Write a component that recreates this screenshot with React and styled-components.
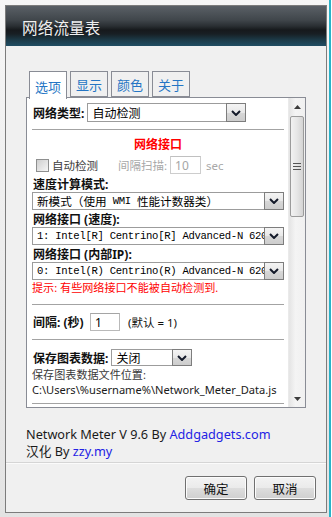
import React from "react";
import styled, { createGlobalStyle } from "styled-components";

const Global = createGlobalStyle`
  html, body { margin: 0; padding: 0; background: #fff; }
  body { font-family: "Noto Sans", "Noto Sans CJK SC", sans-serif; }
  * { box-sizing: border-box; }
`;

const CJK = `"Noto Sans", "Noto Sans CJK SC", sans-serif`;

const Outer = styled.div`
  width: 332px;
  height: 517px;
  padding-right: 1px;
  background: #fff;
`;

const Frame = styled.div`
  height: 100%;
  border-right: 2px solid #29b3c9;
  background: linear-gradient(#f6f6f6, #e3e3e3);
  padding: 5px 2px 4px 5px;
  display: flex;
`;

const Dialog = styled.div`
  flex: 1;
  min-width: 0;
  border: 1px solid #7c7c7c;
  background: #f0f0f0;
  display: flex;
  flex-direction: column;
`;

const TitleBar = styled.div`
  height: 40px;
  flex: none;
  background: linear-gradient(
    to bottom,
    #5a6066 0%,
    #40464b 35%,
    #2a2f33 50%,
    #16191c 60%,
    #181f24 70%,
    #1c3a48 85%,
    #1f4d63 100%
  );
  color: #f0f0f0;
  font-family: ${CJK};
  font-size: 15.5px;
  display: flex;
  align-items: center;
  padding: 3px 0 0 16px;
  letter-spacing: 0.2px;
`;

const Main = styled.div`
  padding: 25px 0 0 20px;
  display: flex;
  flex-direction: column;
`;

const TabRow = styled.div`
  display: flex;
  gap: 3px;
  padding-left: 3px;
  height: 26px;
  align-items: flex-start;
`;

const Tab = styled.div`
  width: 38px;
  height: ${(p) => (p.$active ? "28px" : "26px")};
  border: 1px solid #898c95;
  border-bottom: ${(p) => (p.$active ? "none" : "1px solid #898c95")};
  background: ${(p) => (p.$active ? "#fff" : "#f0f0f0")};
  color: #2475c4;
  font-family: ${CJK};
  font-size: 13px;
  display: flex;
  align-items: center;
  justify-content: center;
  padding-top: 1px;
  position: relative;
  z-index: ${(p) => (p.$active ? 2 : 0)};
`;

const Panel = styled.div`
  width: 280px;
  height: 311px;
  border: 1px solid #898c95;
  background: #fff;
  display: flex;
  overflow: hidden;
`;

const Content = styled.div`
  flex: 1;
  min-width: 0;
  overflow: hidden;
  padding: 0 4px 0 5px;
  display: flex;
  flex-direction: column;
  font-family: ${CJK};
  font-size: 11.5px;
  color: #111;
`;

const Row = styled.div`
  display: flex;
  align-items: center;
  height: ${(p) => p.$h || 18}px;
  margin-top: ${(p) => p.$mt || 0}px;
  gap: ${(p) => p.$gap || 0}px;
  padding-left: ${(p) => p.$pl || 0}px;
  flex: none;
`;

const Label = styled.span`
  font-weight: 700;
  font-size: 12px;
  padding-left: 1px;
  width: ${(p) => (p.$w ? p.$w + "px" : "auto")};
  flex: none;
  white-space: nowrap;
`;

const Rule = styled.div`
  height: 1px;
  background: #a3a3a3;
  margin-top: ${(p) => p.$mt || 0}px;
  flex: none;
`;

const SectionTitle = styled.div`
  height: 16px;
  margin-top: ${(p) => p.$mt || 0}px;
  text-align: center;
  color: #ff0000;
  font-weight: 700;
  font-size: 12px;
  line-height: 16px;
  flex: none;
`;

const Select = styled.div`
  display: flex;
  height: ${(p) => p.$h || 18}px;
  width: ${(p) => (p.$w ? p.$w + "px" : "100%")};
  min-width: 0;
  border: 1px solid #9c9c9c;
  background: #fff;
  flex: none;
`;

const SelectText = styled.div`
  flex: 1;
  min-width: 0;
  overflow: hidden;
  white-space: nowrap;
  display: flex;
  align-items: center;
  padding-left: 4px;
  font-family: ${(p) => (p.$mono ? `"Liberation Mono", "Noto Sans CJK SC", monospace` : CJK)};
  font-size: ${(p) => (p.$mono ? "10.6px" : "12px")};
  letter-spacing: ${(p) => (p.$mono ? "-0.3px" : "0")};
  color: #000;
`;

const Wide = styled.span`
  font-family: "Noto Sans CJK SC", sans-serif;
  font-size: 11.6px;
  letter-spacing: 0;
`;

const DropBtn = styled.div`
  width: 20px;
  flex: none;
  margin: -1px -1px -1px 0;
  border: 1px solid #7d7d7d;
  background: linear-gradient(#f4f4f4 0%, #e8e8e8 50%, #d7d7d7 51%, #cdcdcd 100%);
  display: flex;
  align-items: center;
  justify-content: center;
`;

const Chevron = () => (
  <svg width="10" height="6" viewBox="0 0 10 6">
    <path d="M1 1 L5 5 L9 1" fill="none" stroke="#141a2a" strokeWidth="2" />
  </svg>
);

const Dropdown = ({ children, w, h, mono }) => (
  <Select $w={w} $h={h}>
    <SelectText $mono={mono}>{children}</SelectText>
    <DropBtn>
      <Chevron />
    </DropBtn>
  </Select>
);

const Check = styled.div`
  width: 13px;
  height: 13px;
  border: 1px solid #8e8f8f;
  background: linear-gradient(135deg, #cfcfcf, #f6f6f6);
  flex: none;
`;

const Muted = styled.span`
  color: ${(p) => p.$c || "#a8a8a8"};
  white-space: nowrap;
  margin-left: ${(p) => p.$ml || 0}px;
`;

const TextBox = styled.div`
  width: ${(p) => p.$w}px;
  height: 18px;
  border: 1px solid ${(p) => (p.$disabled ? "#cdcdcd" : "#b9b9b9")};
  border-top-color: ${(p) => (p.$disabled ? "#c0c0c0" : "#a5a5a5")};
  color: ${(p) => (p.$disabled ? "#a5a5a5" : "#000")};
  padding-left: 4px;
  display: flex;
  align-items: center;
  font-size: 12px;
  margin-left: ${(p) => p.$ml || 0}px;
  flex: none;
  background: #fff;
`;

const Note = styled.div`
  height: ${(p) => p.$h || 16}px;
  line-height: ${(p) => p.$h || 16}px;
  margin-top: ${(p) => p.$mt || 0}px;
  color: ${(p) => p.$c || "#ff0000"};
  font-size: 11.1px;
  white-space: nowrap;
  flex: none;
`;

const ScrollBar = styled.div`
  width: 17px;
  flex: none;
  display: flex;
  flex-direction: column;
  background: linear-gradient(to right, #e4e4e4, #f4f4f4 40%, #f0f0f0);
  border-left: 1px solid #eaeaea;
`;

const ArrowBtn = styled.div`
  height: 17px;
  flex: none;
  display: flex;
  align-items: center;
  justify-content: center;
`;

const Track = styled.div`
  flex: 1;
  display: flex;
  flex-direction: column;
  padding: 1px 1px 0 1px;
`;

const Thumb = styled.div`
  height: 101px;
  border: 1px solid #9b9b9b;
  border-radius: 2px;
  background: linear-gradient(to right, #f2f2f2, #e6e6e6 50%, #d4d4d4);
  display: flex;
  align-items: center;
  justify-content: center;
`;

const Grip = () => (
  <svg width="8" height="7" viewBox="0 0 8 7">
    <path d="M0 0.5H8M0 3.5H8M0 6.5H8" stroke="#555" strokeWidth="1" />
  </svg>
);

const Tri = ({ up }) => (
  <svg width="7" height="4" viewBox="0 0 7 4">
    <path d={up ? "M0 4 L3.5 0 L7 4 Z" : "M0 0 L3.5 4 L7 0 Z"} fill="#3c3c3c" />
  </svg>
);

const Footer = styled.div`
  margin-top: 18px;
  font-family: ${CJK};
  font-size: 12.7px;
  line-height: 17px;
  color: #1a1a1a;
`;

const Link = styled.span`
  color: #2323e4;
`;

const Separator = styled.div`
  margin-top: 2px;
  height: 2px;
  border-top: 1px solid #d5d5d5;
  border-bottom: 1px solid #fbfbfb;
`;

const ButtonBar = styled.div`
  display: flex;
  justify-content: flex-end;
  gap: 7px;
  padding: 12px 10px 0 0;
`;

const Button = styled.div`
  width: 62px;
  height: 24px;
  border: 1px solid #707070;
  border-radius: 3px;
  background: linear-gradient(#f3f3f3 0%, #ebebeb 48%, #dddddd 52%, #cfcfcf 100%);
  box-shadow: inset 0 0 0 1px #fcfcfc;
  display: flex;
  align-items: center;
  justify-content: center;
  font-family: ${CJK};
  font-size: 12.5px;
  color: #111;
`;

export default function App() {
  return (
    <>
      <Global />
      <Outer>
        <Frame>
          <Dialog>
            <TitleBar>网络流量表</TitleBar>
            <Main>
              <TabRow>
                <Tab $active>选项</Tab>
                <Tab>显示</Tab>
                <Tab>颜色</Tab>
                <Tab>关于</Tab>
              </TabRow>
              <Panel>
                <Content>
                  <Row $mt={5} $h={19} $gap={3}>
                    <Label>网络类型:</Label>
                    <Dropdown w={159} h={19}>自动检测</Dropdown>
                  </Row>
                  <Rule $mt={7} />
                  <SectionTitle $mt={7}>网络接口</SectionTitle>
                  <Row $mt={3} $pl={4}>
                    <Check />
                    <Muted $c="#3c3c3c" $ml={3}>自动检测</Muted>
                    <Muted $ml={20}>间隔扫描:</Muted>
                    <TextBox $w={31} $ml={3} $disabled>10</TextBox>
                    <Muted $ml={5}>sec</Muted>
                  </Row>
                  <Row $mt={2} $h={16}>
                    <Label>速度计算模式:</Label>
                  </Row>
                  <Dropdown mono>
                    <Wide>新模式（使用</Wide>&nbsp;WMI&nbsp;<Wide>性能计数器类）</Wide>
                  </Dropdown>
                  <Row $mt={1} $h={16}>
                    <Label>网络接口 (速度):</Label>
                  </Row>
                  <Dropdown mono>1:&nbsp;Intel[R]&nbsp;Centrino[R]&nbsp;Advanced-N&nbsp;6205</Dropdown>
                  <Row $mt={1} $h={16}>
                    <Label>网络接口 (内部IP):</Label>
                  </Row>
                  <Dropdown mono>0:&nbsp;Intel(R)&nbsp;Centrino(R)&nbsp;Advanced-N&nbsp;6205</Dropdown>
                  <Note>提示: 有些网络接口不能被自动检测到.</Note>
                  <Rule $mt={8} />
                  <Row $mt={8}>
                    <Label $w={58}>间隔: (秒)</Label>
                    <TextBox $w={30}>1</TextBox>
                    <Muted $c="#111" $ml={8}>(默认 = 1)</Muted>
                  </Row>
                  <Rule $mt={8} />
                  <Row $mt={9} $h={17} $gap={3}>
                    <Label>保存图表数据:</Label>
                    <Dropdown w={81} h={17}>关闭</Dropdown>
                  </Row>
                  <Note $c="#3a3a3a" $h={15} $mt={1}>保存图表数据文件位置:</Note>
                  <Note $c="#1a1a1a" $h={15}>C:\Users\%username%\Network_Meter_Data.js</Note>
                  <Rule $mt={6} />
                </Content>
                <ScrollBar>
                  <ArrowBtn>
                    <Tri up />
                  </ArrowBtn>
                  <Track>
                    <Thumb>
                      <Grip />
                    </Thumb>
                  </Track>
                  <ArrowBtn>
                    <Tri />
                  </ArrowBtn>
                </ScrollBar>
              </Panel>
              <Footer>
                <div>
                  Network Meter V 9.6 By <Link>Addgadgets.com</Link>
                </div>
                <div>
                  汉化 By <Link>zzy.my</Link>
                </div>
              </Footer>
            </Main>
            <Separator />
            <ButtonBar>
              <Button>确定</Button>
              <Button>取消</Button>
            </ButtonBar>
          </Dialog>
        </Frame>
      </Outer>
    </>
  );
}
